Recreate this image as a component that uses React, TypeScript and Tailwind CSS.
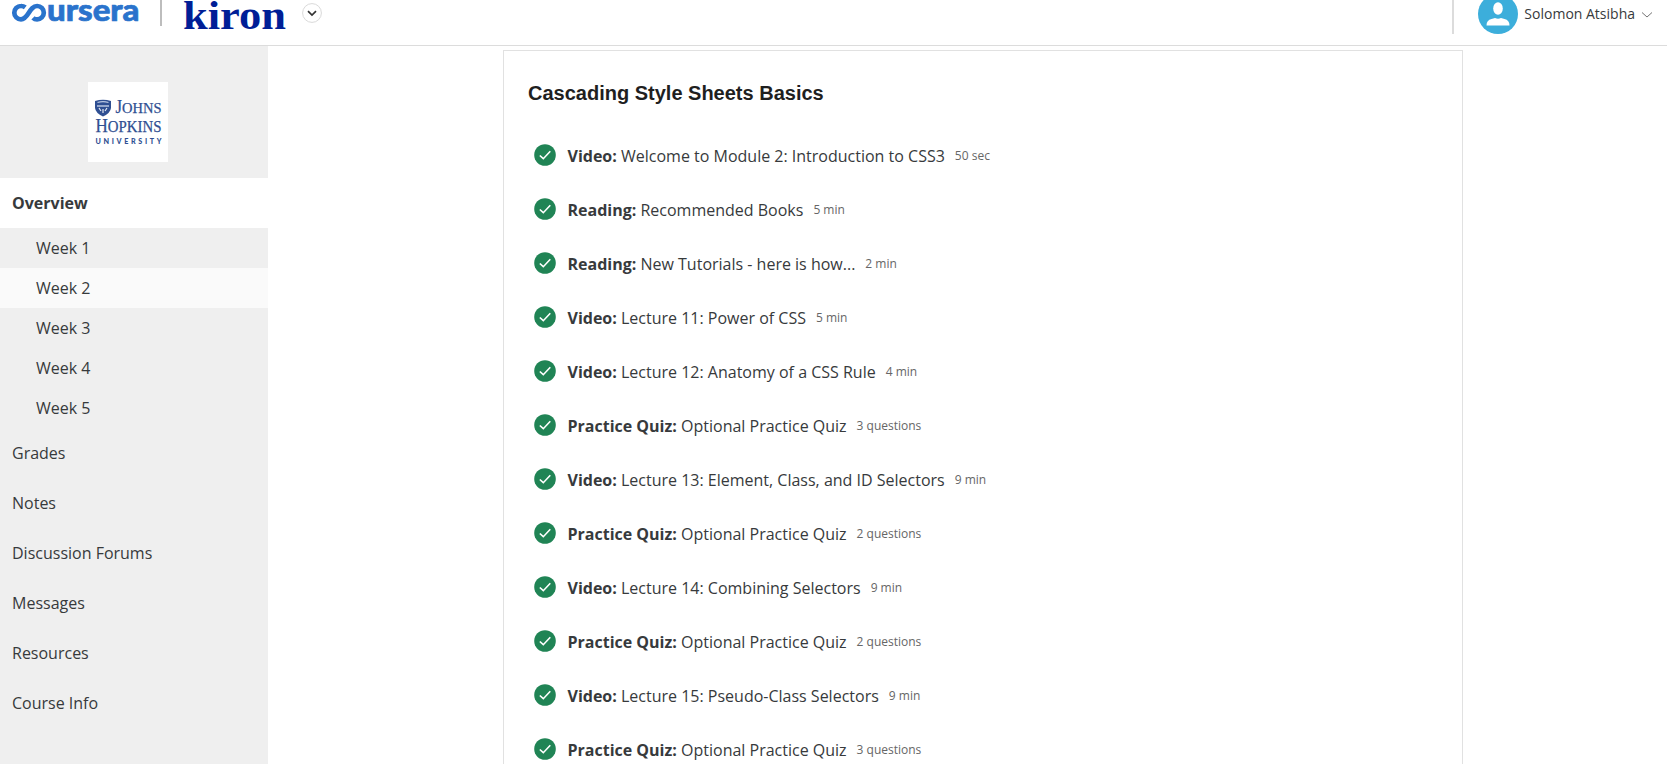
import React from "react";

const weeks = ["Week 1", "Week 2", "Week 3", "Week 4", "Week 5"];
const links = ["Grades", "Notes", "Discussion Forums", "Messages", "Resources", "Course Info"];
const items: [string, string, string][] = [
  ["Video:", "Welcome to Module 2: Introduction to CSS3", "50 sec"],
  ["Reading:", "Recommended Books", "5 min"],
  ["Reading:", "New Tutorials - here is how...", "2 min"],
  ["Video:", "Lecture 11: Power of CSS", "5 min"],
  ["Video:", "Lecture 12: Anatomy of a CSS Rule", "4 min"],
  ["Practice Quiz:", "Optional Practice Quiz", "3 questions"],
  ["Video:", "Lecture 13: Element, Class, and ID Selectors", "9 min"],
  ["Practice Quiz:", "Optional Practice Quiz", "2 questions"],
  ["Video:", "Lecture 14: Combining Selectors", "9 min"],
  ["Practice Quiz:", "Optional Practice Quiz", "2 questions"],
  ["Video:", "Lecture 15: Pseudo-Class Selectors", "9 min"],
  ["Practice Quiz:", "Optional Practice Quiz", "3 questions"],
];

function CourseraLogo() {
  return (
    <svg width="140" height="28" viewBox="0 0 140 28" className="shrink-0 overflow-visible" role="img" aria-label="coursera">
      <path
        d="M25.300 7.400A6.800 6.800 0 0 0 21 6a6.700 6.700 0 0 0 0 13.400C28.600 19.400 29.100 6 37.100 6a6.700 6.700 0 0 1 0 13.400C35.500 19.400 34 18.800 33 17.800"
        fill="none"
        stroke="#2a73cc"
        strokeWidth="4.700"
      />
      <text x="47" y="21.200" fontSize="31" fontWeight="900" fill="#2a73cc" stroke="#2a73cc" strokeWidth=".7" textLength="92.500" lengthAdjust="spacingAndGlyphs" fontFamily="Lato, sans-serif">
        ursera
      </text>
    </svg>
  );
}

function KironLogo() {
  return (
    <svg width="104" height="32" viewBox="0 0 104 32" className="shrink-0 overflow-visible">
      <text x="0" y="28.500" fontSize="41" fontWeight="700" fill="#001e96" textLength="103" lengthAdjust="spacingAndGlyphs" fontFamily="'Liberation Serif', serif">
        kiron
      </text>
    </svg>
  );
}

function UniversityLogo() {
  return (
    <svg width="80" height="80" viewBox="0 0 80 80" className="bg-white" fill="#2f4f92">
      <path d="M7 19q8-2.500 16 0v7q-.5 5-8 8.500q-7.500-3.500-8-8.500z" />
      <path d="M9.500 20.500q5.500-1.800 11 0M9 24h12" fill="none" stroke="#b9c6e0" strokeWidth="1.300" />
      <path d="M11 26l2 3M15 27v4M19 26l-2 3" fill="none" stroke="#e5eaf4" strokeWidth="1.200" />
      <g fontFamily="'Liberation Serif', serif" stroke="#2f4f92" strokeWidth=".25">
        <text x="27.500" y="31" fontSize="18" textLength="46" lengthAdjust="spacingAndGlyphs">
          J<tspan fontSize="15.500">OHNS</tspan>
        </text>
        <text x="7.500" y="50" fontSize="19" textLength="66" lengthAdjust="spacingAndGlyphs">
          H<tspan fontSize="16.500">OPKINS</tspan>
        </text>
      </g>
      <text x="7.500" y="61.700" fontSize="7.200" fontWeight="900" textLength="66" fontFamily="Lato, sans-serif">
        UNIVERSITY
      </text>
    </svg>
  );
}

function CheckCircle() {
  return (
    <svg width="22" height="22" viewBox="0 0 22 22" className="mr-[11.5px] shrink-0">
      <circle cx="11" cy="11" r="10.800" fill="#208455" />
      <path d="M5.800 11.500l3.500 3.200 7-7.400" fill="none" stroke="#fff" strokeWidth="1.600" />
    </svg>
  );
}

export default function App() {
  return (
    <div className="flex h-[764px] w-[1667px] flex-col overflow-hidden bg-white font-['Open_Sans',sans-serif] text-base text-[#373a3c]">
      <header className="flex h-[46px] shrink-0 items-start border-b border-[#dcdcdc]">
        <CourseraLogo />
        <div className="ml-5 h-[26px] w-[2px] bg-[#bdbdbd]" />
        <div className="ml-[21px]">
          <KironLogo />
        </div>
        <svg width="20" height="20" viewBox="0 0 20 20" className="ml-[15px] mt-[3px]">
          <circle cx="10" cy="10" r="9.400" fill="#fff" stroke="#d9d9d9" />
          <path d="M6 8.200l4 3.800 4-3.800" fill="none" stroke="#333" strokeWidth="1.700" />
        </svg>
        <div className="ml-auto h-[34px] w-[2px] bg-[#dcdcdc]" />
        <svg width="40" height="34" viewBox="0 0 40 34" className="ml-6">
          <circle cx="20" cy="14" r="20" fill="#3caedb" />
          <ellipse cx="20" cy="8.500" rx="4.800" ry="6.200" fill="#fff" />
          <path d="M8.500 25.500q0-5.500 5-6.500l3.500-.9q3 1.500 6 0l3.500.9q5 1 5 6.500z" fill="#fff" />
        </svg>
        <span className="ml-[6px] text-sm leading-7">Solomon Atsibha</span>
        <svg width="12" height="8" viewBox="0 0 12 8" className="ml-[6px] mr-[14px] mt-[11px]">
          <path d="M1 1.500l5 4.500 5-4.500" fill="none" stroke="#757575" />
        </svg>
      </header>
      <div className="flex min-h-0 flex-1">
        <aside className="flex w-[268px] shrink-0 flex-col bg-[#efefef]">
          <div className="flex h-[132px] shrink-0 justify-center pt-9">
            <div className="mr-3 h-20">
              <UniversityLogo />
            </div>
          </div>
          <div className="flex h-[50px] shrink-0 items-center bg-white pl-3 font-bold">Overview</div>
          {weeks.map((w) => (
            <div key={w} className={"flex h-10 shrink-0 items-center pl-9 " + (w === "Week 2" ? "bg-[#fafafa]" : "")}>
              {w}
            </div>
          ))}
          {links.map((l) => (
            <div key={l} className="flex h-[50px] shrink-0 items-center pl-3">
              {l}
            </div>
          ))}
        </aside>
        <main className="ml-[235px] mt-1 w-[960px] overflow-hidden border border-b-0 border-[#e1e1e1] pl-6">
          <h2 className="mt-7 font-['Liberation_Sans',sans-serif] text-xl font-bold leading-7 text-[#1f1f1f]">
            Cascading Style Sheets Basics
          </h2>
          <ul className="mt-[21px] pl-[6px]">
            {items.map(([kind, title, time], i) => (
              <li key={i} className="flex h-[54px] items-center">
                <CheckCircle />
                <span className="whitespace-pre pt-[2px]">
                  <b>{kind}</b> {title}
                </span>
                <span className="ml-[10px] pt-[2px] text-xs text-[#666]">{time}</span>
              </li>
            ))}
          </ul>
        </main>
      </div>
    </div>
  );
}
